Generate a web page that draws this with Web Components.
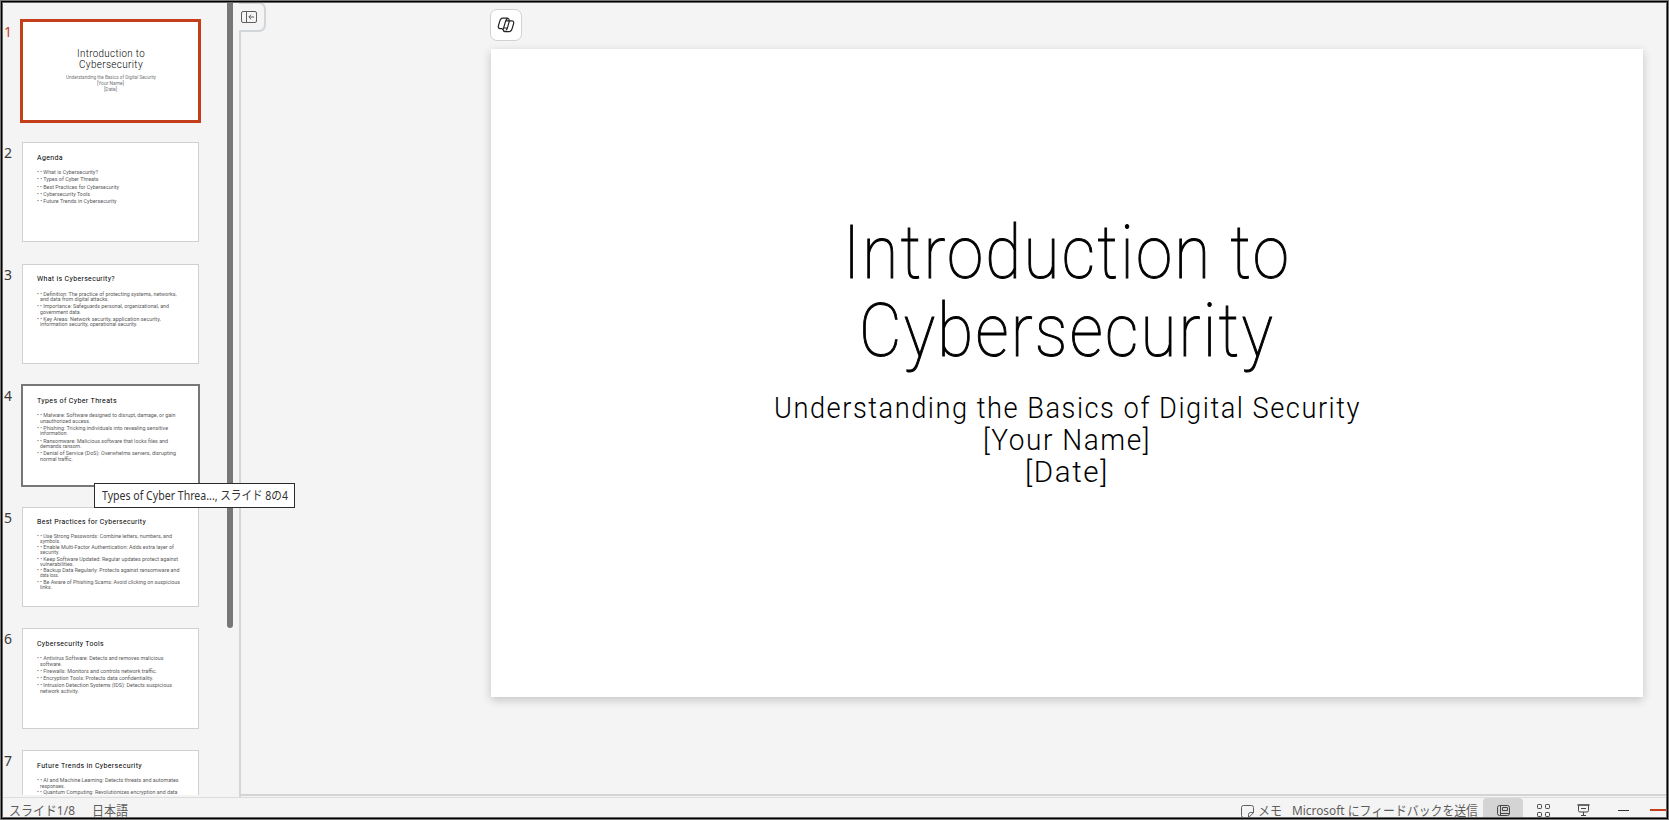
<!DOCTYPE html>
<html lang="ja">
<head>
<meta charset="utf-8">
<title>Introduction to Cybersecurity</title>
<style>
  html, body{ margin:0; height:100%; overflow:hidden; background:#f4f4f4; }
</style>
</head>
<body>
<ppt-app></ppt-app>

<script>
const define = (name, html, setup) => {
  const tpl = document.createElement('template')
  tpl.innerHTML = html
  customElements.define(name, class extends HTMLElement{
    constructor(){
      super()
      this.attachShadow({mode:'open'}).appendChild(tpl.content.cloneNode(true))
    }
    connectedCallback(){ if (setup) setup.call(this, this.shadowRoot) }
  })
}

// one line of text, scaled horizontally to the width attribute
define('fit-text', `
  <style>
    :host{ display:block; white-space:nowrap; }
    span{ display:inline-block; transform-origin:0 50%; }
  </style>
  <span><slot></slot></span>
`, function(root){
  const w = +this.getAttribute('width')
  const span = root.querySelector('span')
  this.style.width = w + 'px'
  span.style.transform = `scaleX(${w / span.getBoundingClientRect().width})`
})

// lines: [text, width, centre y, indent]
const slides = [
  { cover:true, title:[['Introduction to', 68, 33.5], ['Cybersecurity', 64, 44.5]],
    lines:[['Understanding the Basics of Digital Security', 90, 56.5], ['[Your Name]', 27, 62.5], ['[Date]', 13, 68.5]] },
  { title:[['Agenda', 26, 15.6]],
    lines:[['• • What is Cybersecurity?', 61, 30], ['• • Types of Cyber Threats', 61.5, 37], ['• • Best Practices for Cybersecurity', 82, 44.7], ['• • Cybersecurity Tools', 53, 51.7], ['• • Future Trends in Cybersecurity', 79.5, 59]] },
  { title:[['What is Cybersecurity?', 78, 15.6]],
    lines:[['• • Definition: The practice of protecting systems, networks,', 139.5, 30], ['and data from digital attacks.', 69, 35.7, 1], ['• • Importance: Safeguards personal, organizational, and', 132, 42.7], ['government data.', 41, 48, 1], ['• • Key Areas: Network security, application security,', 123.5, 55.7], ['information security, operational security.', 97.5, 60.7, 1]] },
  { hover:true, title:[['Types of Cyber Threats', 80, 15.6]],
    lines:[['• • Malware: Software designed to disrupt, damage, or gain', 138.5, 30.3], ['unauthorized access.', 50.5, 36.3, 1], ['• • Phishing: Tricking individuals into revealing sensitive', 131, 43.3], ['information.', 28, 48.3, 1], ['• • Ransomware: Malicious software that locks files and', 131, 56], ['demands ransom.', 41.5, 61.3, 1], ['• • Denial of Service (DoS): Overwhelms servers, disrupting', 139, 68], ['normal traffic.', 33, 74.3, 1]] },
  { title:[['Best Practices for Cybersecurity', 109, 15.6]],
    lines:[['• • Use Strong Passwords: Combine letters, numbers, and', 135, 29.7], ['symbols.', 20.5, 34, 1], ['• • Enable Multi-Factor Authentication: Adds extra layer of', 137, 40.3], ['security.', 19.5, 45.3, 1], ['• • Keep Software Updated: Regular updates protect against', 141, 52.3], ['vulnerabilities.', 34, 57.3, 1], ['• • Backup Data Regularly: Protects against ransomware and', 142.5, 63.3], ['data loss.', 19, 68, 1], ['• • Be Aware of Phishing Scams: Avoid clicking on suspicious', 143, 75], ['links.', 12, 80, 1]] },
  { title:[['Cybersecurity Tools', 67, 15.3]],
    lines:[['• • Antivirus Software: Detects and removes malicious', 126.5, 30], ['software.', 22, 36, 1], ['• • Firewalls: Monitors and controls network traffic.', 120, 42.7], ['• • Encryption Tools: Protects data confidentiality.', 116.5, 49.7], ['• • Intrusion Detection Systems (IDS): Detects suspicious', 135, 57], ['network activity.', 39, 63, 1]] },
  { title:[['Future Trends in Cybersecurity', 105, 15.6]],
    lines:[['• • AI and Machine Learning: Detects threats and automates', 141.5, 29.7], ['responses.', 25, 35.7, 1], ['• • Quantum Computing: Revolutionizes encryption and data', 140.5, 42.3]] }
]

define('slide-thumb', `
  <style>
    :host{ display:flex; height:121.6px; flex:none; }
    .no{ width:16px; padding-left:2px; box-sizing:border-box; margin-right:4px; font:14px/22px "Noto Sans", "Open Sans", sans-serif; color:#3b3a39; }
    .page{ box-sizing:border-box; width:177px; height:100.5px; background:#fff; box-shadow:inset 0 0 0 1px #d0d0d0; padding-left:14.5px; font-family:Roboto, "Liberation Sans", sans-serif; display:flow-root; }
    .t{ font-size:8px; line-height:10px; height:10px; color:#000; letter-spacing:.4px; }
    .l{ font-size:5.5px; line-height:6px; height:6px; color:#5a5a5a; }
    .in{ margin-left:3.5px; }
    :host([cover]) .page{ margin:1px 0; height:100px; padding:0; box-shadow:0 0 0 2px #c43e1c, inset 0 0 0 1px #c43e1c; }
    :host([cover]) .no{ color:#c43e1c; line-height:24px; }
    :host([cover]) .t{ font-size:11px; font-weight:300; margin-inline:auto; }
    :host([cover]) .l{ margin-inline:auto; color:#777; }
    :host([hover]) .page{ box-shadow:0 0 0 1px #797775, inset 0 0 0 1px #797775; }
  </style>
  <div class="no"></div>
  <div class="page"></div>
`, function(root){
  const i = +this.getAttribute('index')
  const s = slides[i]
  if (s.cover) this.setAttribute('cover', '')
  if (s.hover) this.setAttribute('hover', '')
  root.querySelector('.no').textContent = i + 1
  const page = root.querySelector('.page')
  let end = s.cover ? 1 : 0
  const add = ([text, width, y, indent], cls, h) => {
    const el = document.createElement('fit-text')
    el.className = cls + (indent ? ' in' : '')
    el.setAttribute('width', width)
    el.textContent = text
    el.style.marginTop = (y - h / 2 - end) + 'px'
    end = y + h / 2
    page.appendChild(el)
  }
  s.title.forEach(t => add(t, 't', 10))
  s.lines.forEach(l => add(l, 'l', 6))
})

define('thumb-pane', `
  <style>
    :host{ display:flex; width:239px; flex:none; box-sizing:border-box; padding-left:2px; overflow:hidden; }
    .list{ width:225px; height:795px; box-sizing:border-box; padding-top:20.4px; overflow:hidden; display:flex; flex-direction:column; flex:none; }
    .bar{ width:6px; height:628px; background:#797775; border-radius:0 0 3px 3px; }
  </style>
  <div class="list"></div>
  <div class="bar"></div>
`, function(root){
  const list = root.querySelector('.list')
  slides.forEach((s, i) => {
    const el = document.createElement('slide-thumb')
    el.setAttribute('index', i)
    list.appendChild(el)
  })
})

define('slide-canvas', `
  <style>
    :host{ display:block; width:1152px; height:648px; box-sizing:border-box; background:#fff; box-shadow:0 3px 9px rgba(0,0,0,.2); padding-top:165px; color:#000; font-family:Roboto, "Liberation Sans", sans-serif; }
    fit-text{ margin-inline:auto; }
    .h{ font-size:74px; line-height:78px; font-weight:100; letter-spacing:2.5px; -webkit-text-stroke:1px #000; }
    .s{ font-size:28.8px; line-height:32px; font-weight:300; letter-spacing:1.6px; }
    .gap{ height:22px; }
  </style>
  <fit-text class="h" width="448">Introduction to</fit-text>
  <fit-text class="h" width="416">Cybersecurity</fit-text>
  <div class="gap"></div>
  <fit-text class="s" width="587">Understanding the Basics of Digital Security</fit-text>
  <fit-text class="s" width="168">[Your Name]</fit-text>
  <fit-text class="s" width="84">[Date]</fit-text>
`)

define('edit-area', `
  <style>
    :host{ display:flex; flex:1; }
    .side{ width:26px; flex:none; display:flex; flex-direction:column; }
    .tab{ box-sizing:border-box; width:27px; height:30px; margin-top:2px; border:2px solid #d2d6d9; border-left:0; border-radius:0 7px 7px 0; padding:7px 0 0 2px; }
    .line{ width:2px; flex:1; background:#d2d6d9; }
    .main{ flex:1; display:flex; flex-direction:column; border-bottom:2px solid #d2d4d6; margin-left:-24px; margin-bottom:1px; padding-left:250px; }
    .copilot{ box-sizing:border-box; width:32px; height:32px; margin:9px 0 8px -1px; border:1px solid #d1d1d1; border-radius:7px; background:#fff; display:grid; place-items:center; }
    svg{ display:block; }
  </style>
  <div class="side">
    <div class="tab"><svg width="16" height="12" viewBox="0 0 16 12" fill="none" stroke="#605e5c"><rect x=".5" y=".5" width="15" height="11" rx="1.5"/><path d="M5.5.5v11M13 6H8M10 3.8 7.8 6 10 8.2"/></svg></div>
    <div class="line"></div>
  </div>
  <div class="main">
    <div class="copilot"><svg width="18" height="16" viewBox="0 0 18 16" fill="none" stroke="#242424" stroke-width="1.2" stroke-linejoin="round"><path d="M5.4 1.2h5c1.3 0 1.7.8 2.1 2.6M5.4 1.2C3.9 1.2 3.3 2.4 2.7 4.4L1.5 8.5c-.6 2.2.1 3.1 1.7 3.1h2M8.7 3.8 6.6 11c-.3 1-.8 1.5-1.6 1.5M8.7 3.8C9 2.7 9.4 2.2 10.4 2.2M8.7 3.8h5.9c1.7 0 2.5.9 1.9 3.1l-1.2 4.3c-.6 2-1.2 3.4-2.7 3.4H8c-1.3 0-1.7-.8-2.1-2.6M12.4 3.8 10.2 11.6c-.3 1-.7 1.5-1.5 1.5M6.6 11h3.7"/></svg></div>
    <slide-canvas></slide-canvas>
  </div>
`)

define('status-bar', `
  <style>
    :host{ display:flex; height:21px; box-sizing:border-box; border-top:1px solid #dcdcdc; padding:0 3px 0 9px; overflow:hidden; color:#605e5c; font:13px/25px "Noto Sans", "Noto Sans CJK JP", sans-serif; }
    fit-text{ height:20px; flex:none; }
    .lang{ margin-left:17px; }
    .right{ margin-left:auto; display:flex; }
    .memo{ margin:7px 4px 0 0; }
    .fb{ margin:0 5px 0 10px; }
    .sel{ width:40px; height:21px; background:#d4d4d4; border-radius:4px 4px 0 0; }
    .view{ width:40px; }
    .zoom{ width:23px; }
    svg{ display:block; }
    .sel svg, .view svg{ margin:6px auto 0; }
  </style>
  <fit-text width="66">スライド1/8</fit-text>
  <fit-text class="lang" width="36">日本語</fit-text>
  <div class="right">
    <svg class="memo" width="13" height="13" viewBox="0 0 13 13" fill="none" stroke="#605e5c"><path d="M2.5.5h8a2 2 0 0 1 2 2v5.2l-4.8 4.8H2.5a2 2 0 0 1-2-2v-8a2 2 0 0 1 2-2zM12.5 7.5h-3a2 2 0 0 0-2 2v3"/></svg>
    <fit-text width="24">メモ</fit-text>
    <fit-text class="fb" width="186">Microsoft にフィードバックを送信</fit-text>
    <div class="sel"><svg width="13" height="13" viewBox="0 0 13 13" fill="none" stroke="#484644"><rect x=".5" y="1.5" width="12" height="10" rx="2"/><path d="M3.5 1.5v10M3.5 9.500h9M5.500 3.500h5v3h-5z"/></svg></div>
    <div class="view"><svg width="13" height="13" viewBox="0 0 13 13" fill="none" stroke="#484644"><rect x=".5" y=".5" width="4" height="4" rx=".8"/><rect x="8.5" y=".5" width="4" height="4" rx=".8"/><rect x=".5" y="8.5" width="4" height="4" rx=".8"/><rect x="8.5" y="8.5" width="4" height="4" rx=".8"/></svg></div>
    <div class="view"><svg width="13" height="13" viewBox="0 0 13 13" fill="none" stroke="#484644"><path d="M.5 1h12" stroke-width="1.6"/><path d="M1.5 1.5v5A1.5 1.5 0 0 0 3 8h7a1.500 1.500 0 0 0 1.500-1.500v-5M4 4.500h5M6.500 8v3.500M4 11.500h5"/></svg></div>
    <div class="view"><svg width="11" height="13" viewBox="0 0 11 13" stroke="#323130"><path d="M0 6.500h11"/></svg></div>
    <svg class="zoom" width="23" height="20" viewBox="0 0 23 20"><path d="M7 12h16" stroke="#c43e1c" stroke-width="2"/></svg>
  </div>
`)

define('hover-tip', `
  <style>
    :host{ position:absolute; left:94px; top:483px; box-sizing:border-box; width:201px; height:25px; padding-left:7px; background:#fff; border:1px solid #2b2b2b; color:#333; font:12.5px/24px "Noto Sans", "Noto Sans CJK JP", sans-serif; }
  </style>
  <fit-text width="186"><slot></slot></fit-text>
`)

define('ppt-app', `
  <style>
    :host{ display:flex; flex-direction:column; position:relative; box-sizing:border-box; width:1669px; height:820px; overflow:hidden; background:#f4f4f4; }
    .work{ display:flex; height:797px; flex:none; }
    .frame{ position:absolute; inset:0; border:1px solid #777; box-shadow:inset 0 0 0 1px #000, inset 0 0 0 2px #666; }
  </style>
  <div class="work">
    <thumb-pane></thumb-pane>
    <edit-area></edit-area>
  </div>
  <status-bar></status-bar>
  <hover-tip>Types of Cyber Threa..., スライド 8の4</hover-tip>
  <div class="frame"></div>
`)
</script>
</body>
</html>
